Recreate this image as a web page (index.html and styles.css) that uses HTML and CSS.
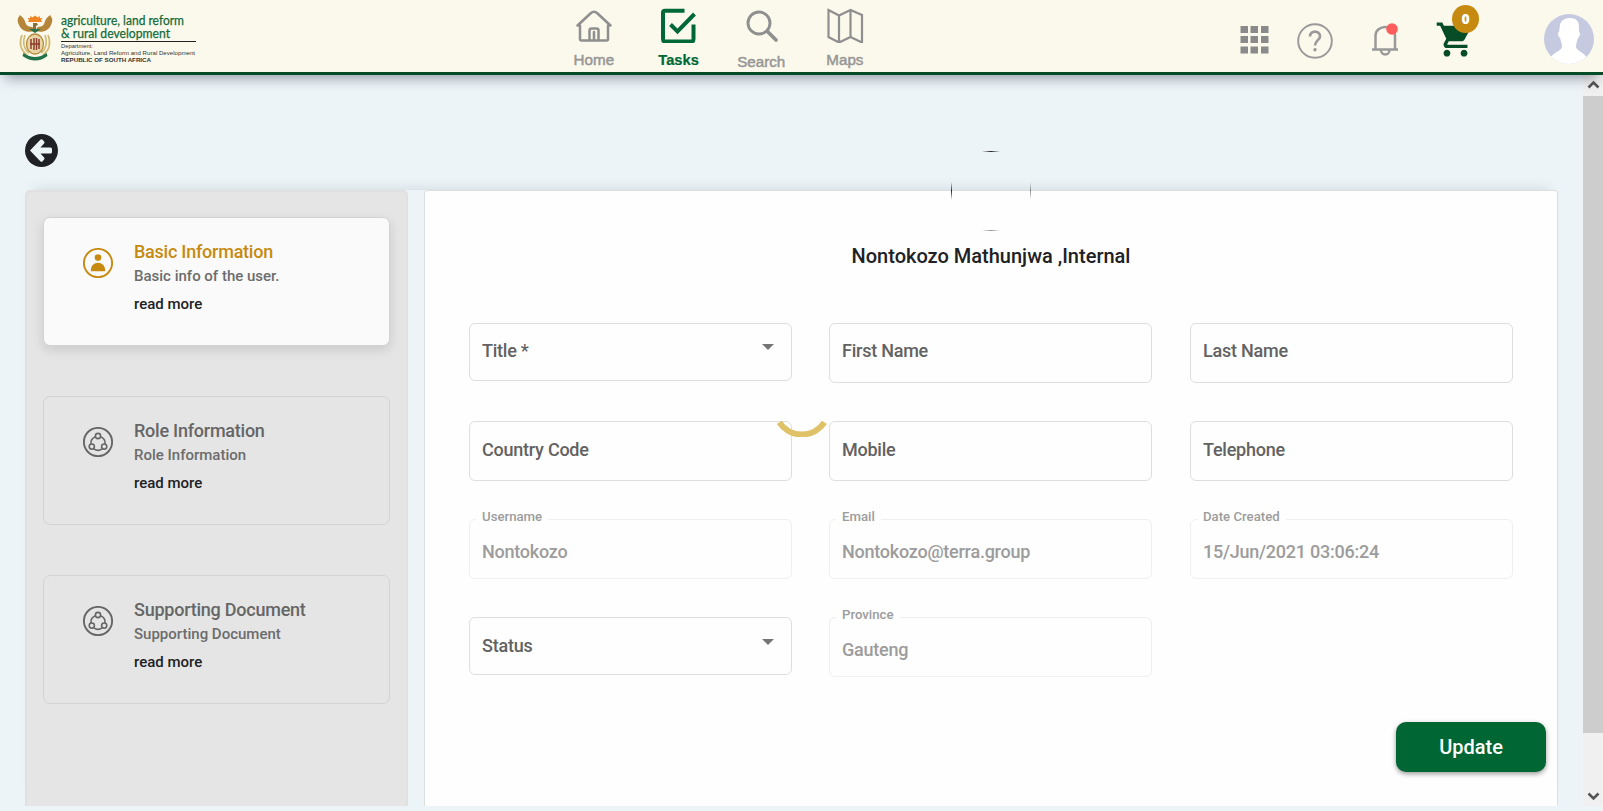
FILE: index.html
```
<!DOCTYPE html>
<html lang="en">
<head>
<meta charset="utf-8">
<title>User Profile</title>
<link rel="stylesheet" href="styles.css">
</head>
<body>
<header class="topbar">
  <svg class="logo" width="184" height="56" viewBox="14 8 184 56">
    <path d="M18.500 15c4 1 6 4 7 8 1 3 4 4 7 4l2 4c-7 2-13 0-15.500-6-1.500-3-2.500-7 1.500-10zM51.500 15c-4 1-6 4-7 8-1 3-4 4-7 4l-2 4c7 2 13 0 15.500-6 1.500-3 2.500-7-1.500-10z" fill="#b5853a"/>
    <path d="M28 22l1-2-1.500-2 2.500.3.500-2.300 2 1.500 2.500-2 2.500 2 2-1.500.5 2.300 2.500-.3-1.500 2 1 2z" fill="#f08322"/>
    <path d="M33 23h4l1 2-2 1v5h-3z" fill="#87713a"/>
    <path d="M29 29h12l-6 4z" fill="#27704a"/>
    <path d="M22 35c-3 7-2 15 5 20M25 35c-3 8-1 14 4 18M48 35c3 7 2 15-5 20M45 35c3 8 1 14-4 18" fill="none" stroke="#d3ba72" stroke-width="1.700"/>
    <ellipse cx="35" cy="44" rx="8.500" ry="10" fill="#e8d6a9" stroke="#b98a3a" stroke-width="1.300"/>
    <path d="M31 39v10M34 38v12M36.500 38v12M39 39v10M30 44h10" stroke="#8c3d2c" stroke-width="1.500"/>
    <path d="M23.500 53q11.500 8 23 0l1 3q-12 9-25 0z" fill="#237149"/>
    <g class="logo-title">
      <text x="61" y="25" textLength="123" lengthAdjust="spacingAndGlyphs">agriculture, land reform</text>
      <text x="61" y="37.500" textLength="109" lengthAdjust="spacingAndGlyphs">&amp; rural development</text>
    </g>
    <path d="M61 41.500h135" stroke="#222" stroke-width="1.200"/>
    <g class="logo-sub">
      <text x="61" y="48" textLength="32" lengthAdjust="spacingAndGlyphs">Department:</text>
      <text x="61" y="55" textLength="134" lengthAdjust="spacingAndGlyphs">Agriculture, Land Reform and Rural Development</text>
      <text x="61" y="61.500" textLength="90" lengthAdjust="spacingAndGlyphs" class="strong">REPUBLIC OF SOUTH AFRICA</text>
    </g>
  </svg>

  <nav class="nav">
    <a class="nav-item">
      <svg width="38" height="36" viewBox="0 0 38 36"><g fill="none" stroke="#8f8f8f" stroke-width="2.500" stroke-linejoin="round" stroke-linecap="round"><path d="M2.500 18.500L16 6q3-2.500 6 0L35.500 18.500H33v13.500q0 1.500-1.500 1.500h-25Q5 33.500 5 32V18.500z"/><path d="M14.500 33V23.500q0-2 2-2h5q2 0 2 2V33M19 25v8"/></g></svg>
      <span>Home</span>
    </a>
    <a class="nav-item active">
      <svg width="38" height="36" viewBox="0 0 38 36"><path d="M25.500 3.800H6Q4 3.800 4 6v26q0 2.500 2.500 2.500H32q2.500 0 2.500-2.500V17.500M11.500 17.500l7 7L35.500 7" fill="none" stroke="#006838" stroke-width="4"/></svg>
      <span>Tasks</span>
    </a>
    <a class="nav-item low">
      <svg width="38" height="36" viewBox="0 0 38 36"><g fill="none" stroke="#8f8f8f" stroke-width="2.900" stroke-linecap="round"><circle cx="17" cy="16" r="11"/><path d="M25.500 24.500l8.500 8.500" stroke-width="3.700"/></g></svg>
      <span>Search</span>
    </a>
    <a class="nav-item">
      <svg width="38" height="36" viewBox="0 0 38 36"><path d="M2.500 3l10.500 5.500L24.500 3 36 8v27.500L24.500 30 13 35.500 2.500 30zM13 8.500v27M24.500 3v27" fill="none" stroke="#8f8f8f" stroke-width="2.200"/></svg>
      <span>Maps</span>
    </a>
  </nav>

  <div class="actions">
    <svg class="apps" width="29" height="28" viewBox="0 0 29 28" fill="#8a8a8a"><path d="M.500 0h7.500v7H.500zM10.500 0h7.500v7h-7.500zM21 0h7.500v7H21zM.500 10h7.500v7H.500zM10.500 10h7.500v7h-7.500zM21 10h7.500v7H21zM.500 20.500h7.500v7H.500zM10.500 20.500h7.500v7h-7.500zM21 20.500h7.500v7H21z"/></svg>
    <svg class="help" width="36" height="36" viewBox="0 0 36 36" fill="none" stroke="#999"><circle cx="18" cy="18" r="16.800" stroke-width="1.900"/><path d="M13 13.500c0-6.500 10-6.500 10 0 0 3.500-5 4-5 9" stroke-width="2.600"/><circle cx="18" cy="26.800" r="1.700" fill="#999" stroke="none"/></svg>
    <svg class="bell" width="28" height="34" viewBox="0 0 28 34"><path d="M1 26.500h26M4.500 26V13c0-12 19.500-12 19.500 0v13M10 27c0 6 8.500 6 8.500 0" fill="none" stroke="#999" stroke-width="2.500"/><circle cx="21" cy="6" r="5.800" fill="#ff5c5c"/></svg>
    <div class="cart">
      <svg width="41" height="41" viewBox="0 0 24 24" fill="#064d27"><path d="M7 18c-1.100 0-1.990.9-1.990 2S5.900 22 7 22s2-.9 2-2-.9-2-2-2zM1 2v2h2l3.600 7.590-1.350 2.450c-.16.280-.25.610-.25.960 0 1.100.9 2 2 2h12v-2H7.420c-.14 0-.25-.11-.25-.25l.03-.12.900-1.630h7.450c.75 0 1.410-.41 1.750-1.030l3.580-6.490A1 1 0 0 0 20 4H5.210l-.94-2H1zm16 16c-1.100 0-1.990.9-1.990 2s.890 2 1.990 2 2-.9 2-2-.9-2-2-2z"/></svg>
      <span class="badge">0</span>
    </div>
    <svg class="avatar" width="50" height="50" viewBox="0 0 50 50"><clipPath id="face"><circle cx="25" cy="25" r="25"/></clipPath><g clip-path="url(#face)"><path d="M0 0h50v50H0z" fill="#c5cae0"/><path d="M16 11c1-5 5-7 10-7 6 0 9 3 9 9v5c2 1 1 4-1 6-1 4-2 5-2 9 1 4 8 5 12 12v5H6v-6c4-6 11-7 12-11 0-4-1-5-2-9-2-2-3-5-1-6z" fill="#fff"/></g></svg>
  </div>
</header>

<div class="viewport">
  <main class="page">
    <svg class="back" width="33" height="33" viewBox="0 0 33 33"><circle cx="16.500" cy="16.500" r="16.500" fill="#202124"/><path d="M5 16.500L15.300 5.800q1.200-1 2.300 0l1.500 1.600q1 1.100 0 2.200L15.500 13.500H25.500q1.500 0 1.500 1.500v3q0 1.500-1.500 1.500H15.500l3.600 3.900q1 1.100 0 2.200l-1.500 1.600q-1.100 1-2.300 0z" fill="#edf4f8"/></svg>

    <div class="columns">
      <aside class="steps">
        <section class="step current">
          <svg width="30" height="30" viewBox="0 0 30 30" fill="#c68a10"><circle cx="15" cy="15" r="14.100" fill="none" stroke="#c68a10" stroke-width="1.900"/><circle cx="15" cy="9.600" r="3.300"/><path d="M7.800 23.300c-.5-11.300 14.900-11.300 14.400 0z"/></svg>
          <div><h3>Basic Information</h3><p>Basic info of the user.</p><a>read more</a></div>
        </section>
        <section class="step">
          <svg width="30" height="30" viewBox="0 0 30 30" fill="none" stroke="#666"><circle cx="15" cy="15" r="14.100" stroke-width="1.900"/><g stroke-width="1.600"><circle cx="15" cy="9" r="2.600"/><circle cx="8.800" cy="19.600" r="2.600"/><circle cx="21.200" cy="19.600" r="2.600"/><path d="M12.400 9.800C9 11.200 7.600 14 8 17M17.600 9.800c3.400 1.400 4.800 4.200 4.400 7.200M10.800 21.800c2.600 1.900 5.800 1.900 8.400 0"/></g></svg>
          <div><h3>Role Information</h3><p>Role Information</p><a>read more</a></div>
        </section>
        <section class="step">
          <svg width="30" height="30" viewBox="0 0 30 30" fill="none" stroke="#666"><circle cx="15" cy="15" r="14.100" stroke-width="1.900"/><g stroke-width="1.600"><circle cx="15" cy="9" r="2.600"/><circle cx="8.800" cy="19.600" r="2.600"/><circle cx="21.200" cy="19.600" r="2.600"/><path d="M12.400 9.800C9 11.200 7.600 14 8 17M17.600 9.800c3.400 1.400 4.800 4.200 4.400 7.200M10.800 21.800c2.600 1.900 5.800 1.900 8.400 0"/></g></svg>
          <div><h3>Supporting Document</h3><p>Supporting Document</p><a>read more</a></div>
        </section>
      </aside>

      <section class="panel">
        <svg class="photo" width="80" height="80" viewBox="0 0 80 80">
          <defs>
            <linearGradient id="h"><stop offset="0" stop-color="#222" stop-opacity="0"/><stop offset=".5" stop-color="#222"/><stop offset="1" stop-color="#222" stop-opacity="0"/></linearGradient>
            <linearGradient id="v" x2="0" y2="1"><stop offset="0" stop-color="#222" stop-opacity="0"/><stop offset=".5" stop-color="#222"/><stop offset="1" stop-color="#222" stop-opacity="0"/></linearGradient>
          </defs>
          <rect x="31" y="0" width="18" height="1" fill="url(#h)"/>
          <rect x="31" y="79" width="18" height="1" fill="url(#h)" opacity=".5"/>
          <rect x="0" y="31" width="1" height="18" fill="url(#v)"/>
          <rect x="79" y="31" width="1" height="18" fill="url(#v)" opacity=".5"/>
        </svg>
        <h2 class="user-name">Nontokozo Mathunjwa ,Internal</h2>
        <form class="fields">
          <div class="field select first"><span>Title *</span><i class="caret"></i></div>
          <div class="field first"><span>First Name</span></div>
          <div class="field first"><span>Last Name</span></div>
          <div class="field"><span>Country Code</span></div>
          <div class="field"><span>Mobile</span></div>
          <div class="field"><span>Telephone</span></div>
          <div class="field disabled"><label>Username</label><span>Nontokozo</span></div>
          <div class="field disabled"><label>Email</label><span>Nontokozo@terra.group</span></div>
          <div class="field disabled"><label>Date Created</label><span>15/Jun/2021 03:06:24</span></div>
          <div class="field select"><span>Status</span><i class="caret"></i></div>
          <div class="field disabled"><label>Province</label><span>Gauteng</span></div>
        </form>
        <button class="update" type="button">Update</button>
      </section>
    </div>
  </main>

  <div class="scrollbar">
    <svg width="20" height="21" viewBox="0 0 20 21"><path d="M5.500 12.500l5-5 5 5" fill="none" stroke="#555" stroke-width="2.600"/></svg>
    <div class="thumb"></div>
    <svg class="down" width="20" height="21" viewBox="0 0 20 21"><path d="M5.500 8.500l5 5 5-5" fill="none" stroke="#555" stroke-width="2.600"/></svg>
  </div>
</div>
<svg class="spinner" width="60" height="60" viewBox="0 0 60 60"><path d="M7.300 45.300A27 27 0 0 0 52.400 45.300" fill="none" stroke="#dfc268" stroke-width="6"/></svg>
</body>
</html>
```
FILE: styles.css
```
* { box-sizing: border-box; }
body {
  margin: 0;
  height: 811px;
  overflow: hidden;
  background: #ecf4f7;
  font-family: Roboto, "Liberation Sans", sans-serif;
  font-weight: 500;
  color: #202124;
}
svg { display: block; flex: none; }
h2, h3, p { margin: 0; font-weight: 500; }

.topbar {
  position: relative;
  z-index: 2;
  display: flex;
  height: 75px;
  background: #fbf9eb;
  border-bottom: 3px solid #064d27;
  box-shadow: 0 8px 12px -5px rgba(30, 30, 55, .42);
}
.logo { margin: 8px 0 0 14px; overflow: visible; }
.logo-title { font: 12.500px/12px Lato, sans-serif; fill: #146b3a; stroke: #146b3a; stroke-width: .25; }
.logo-sub { font: 6.200px "Liberation Sans", sans-serif; fill: #333; }
.logo-sub .strong { font-weight: bold; }

.nav { display: flex; margin-left: 354px; padding-top: 7px; }
.nav-item {
  display: flex;
  flex-direction: column;
  align-items: center;
  width: 83.700px;
  color: #979797;
  font: 15.200px/16px "Liberation Sans", sans-serif;
  -webkit-text-stroke: .5px currentColor;
}
.nav-item span { margin-top: 9px; }
.nav-item.low span { margin-top: 11px; }
.nav-item.active { color: #006838; font-weight: bold; font-size: 14.700px; -webkit-text-stroke: .2px currentColor; }
.nav-item.active span { margin-left: 2px; }

.actions { display: flex; margin-left: auto; padding-right: 9px; }
.apps { margin-top: 26px; }
.help { margin: 23px 0 0 28px; }
.bell { margin: 23px 0 0 38px; }
.cart { position: relative; width: 40px; margin: 19px 0 0 36px; }
.badge {
  position: absolute;
  left: 17px;
  top: -14px;
  width: 27px;
  height: 28px;
  border-radius: 50%;
  background: #c68a10;
  color: #fff;
  font: 800 14px/27px "Open Sans", sans-serif;
  text-align: center;
}
.avatar { margin: 14px 0 0 69px; }

.viewport { display: flex; height: 731px; }
.page { flex: 1; padding: 59px 25px 0; }
.columns {
  display: flex;
  gap: 16px;
  height: 616px;
  margin-top: 23px;
  background: #ecf4f7;
  box-shadow: 0 -9px 12px -9px rgba(40, 60, 80, .16);
}
.steps {
  display: flex;
  flex-direction: column;
  gap: 50px;
  width: 383px;
  padding: 25px 16px;
  background: #e5e5e5;
  border: 2px solid #e0e0e2;
  border-bottom: 0;
  border-radius: 5px 5px 0 0;
}
.step {
  display: flex;
  gap: 21px;
  height: 129px;
  padding: 30px 39px;
  border: 1px solid #d3d3d3;
  border-radius: 7px;
}
.step > div { display: flex; flex-direction: column; margin-top: -7px; }
.step h3 { font-size: 18px; letter-spacing: -.24px; line-height: 22px; color: #666; }
.step p { margin-top: 3px; font-size: 15px; line-height: 20px; color: #6c6c6c; }
.step a { margin-top: 8px; font-size: 15px; line-height: 20px; }
.step.current { background: #fafafa; box-shadow: 0 4px 12px rgba(0, 0, 0, .12); }
.step.current h3 { color: #c68a10; }

.panel {
  display: flex;
  flex-direction: column;
  align-items: center;
  width: 1134px;
  background: #fefefe;
  border: 1px solid #dcdfe2;
  border-bottom: 0;
  border-radius: 4px 4px 0 0;
}
.photo { margin-top: -40px; }
.user-name { margin-top: 13px; font-size: 20px; line-height: 24px; }
.fields {
  display: grid;
  align-self: flex-start;
  grid-template-columns: 323px 324px 323px;
  column-gap: 37px;
  row-gap: 38px;
  margin: 55px 0 0 44px;
}
.field {
  position: relative;
  display: flex;
  justify-content: space-between;
  width: 323px;
  height: 60px;
  padding: 17px 17px 0 12px;
  border: 1px solid #dedede;
  border-radius: 6px;
  color: #626262;
  font-size: 18px;
  letter-spacing: -.24px;
  line-height: 21px;
}
.field.first { padding-top: 16px; }
.field.select { height: 58px; }
.field.disabled { padding-top: 21px; border-color: #efefef; color: #9c9c9c; }
.field label {
  position: absolute;
  left: 6px;
  top: -11px;
  padding: 0 6px;
  background: #fefefe;
  font-size: 13.200px;
  letter-spacing: 0;
  line-height: 16px;
}
.caret {
  width: 12px;
  height: 6px;
  margin-top: 4px;
  background: #757575;
  clip-path: polygon(0 0, 100% 0, 50% 100%);
}
.update {
  align-self: flex-end;
  width: 150px;
  height: 50px;
  margin: 45px 11px 0 0;
  padding: 0;
  border: 0;
  border-radius: 10px;
  background: #006633;
  box-shadow: 0 2px 5px rgba(0, 0, 0, .4);
  color: #fff;
  font: 500 20px/48px Roboto, sans-serif;
}
.scrollbar { width: 20px; background: #f0f0f0; }
.thumb { height: 637px; background: #cdcdcd; }
.down { margin-top: 52px; }
.spinner { position: absolute; left: 772px; top: 377px; z-index: 3; }
```
